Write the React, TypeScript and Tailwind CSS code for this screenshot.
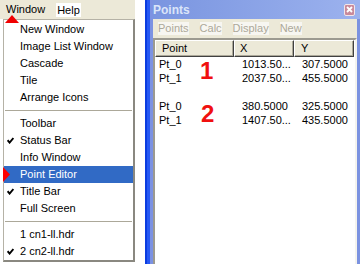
const menuItems: Array<{ label?: string; sep?: boolean; checked?: boolean; active?: boolean }> = [
  { label: "New Window" },
  { label: "Image List Window" },
  { label: "Cascade" },
  { label: "Tile" },
  { label: "Arrange Icons" },
  { sep: true },
  { label: "Toolbar" },
  { label: "Status Bar", checked: true },
  { label: "Info Window" },
  { label: "Point Editor", active: true },
  { label: "Title Bar", checked: true },
  { label: "Full Screen" },
  { sep: true },
  { label: "1 cn1-ll.hdr" },
  { label: "2 cn2-ll.hdr", checked: true },
];

const rows: Array<[string, string, string]> = [
  ["Pt_0", "1013.50...", "307.5000"],
  ["Pt_1", "2037.50...", "455.5000"],
  ["", "", ""],
  ["Pt_0", "380.5000", "325.5000"],
  ["Pt_1", "1407.50...", "435.5000"],
];

function Check() {
  return (
    <svg width="7" height="7" viewBox="0 0 7 7" className="absolute left-[3px] top-[5px]">
      <polyline points="0.6,3.2 2.6,5.6 6.4,1" fill="none" stroke="#000" strokeWidth="1.9" />
    </svg>
  );
}

function WindowMenu() {
  return (
    <div className="relative flex w-[135px] flex-col">
      {/* menu bar */}
      <div className="flex h-[19px] items-center bg-[#ece9d8]">
        <span className="pl-[6px] pr-[7px]">Window</span>
        <span className="ml-[4px] bg-white px-[1px] leading-[14px]">Help</span>
      </div>
      {/* pointer under "Window" */}
      <svg width="14" height="8" viewBox="0 0 14 8" className="absolute left-[5px] top-[15px]">
        <polygon points="7,0 14,8 0,8" fill="#f00000" />
      </svg>

      {/* dropdown */}
      <div className="ml-[3px] flex flex-col border-t border-l border-[#b5b2a6] border-r-2 border-b-2 border-r-[#8a8880] border-b-[#8a8880] bg-white pt-[1px]">
        {menuItems.map((it, i) =>
          it.sep ? (
            <div key={i} className="flex h-[9px] items-center px-[1px]">
              <div className="h-px w-full bg-[#aca899]" />
            </div>
          ) : (
            <div
              key={i}
              className={`relative flex h-[17px] items-center pl-[16px] ${it.active ? "bg-[#316ac5] text-white" : ""}`}
            >
              {it.checked && <Check />}
              {it.active && (
                <svg width="7" height="15" viewBox="0 0 7 15" className="absolute left-[-1px] top-[1px]">
                  <polygon points="0,0 7,7.5 0,15" fill="#ff0000" />
                </svg>
              )}
              {it.label}
            </div>
          )
        )}
      </div>
    </div>
  );
}

function PointsWindow() {
  return (
    <div className="flex h-[264px] w-[215px]">
      {/* left frame */}
      <div className="flex h-full">
        <div className="w-[2px] bg-[#0b3ce0]" />
        <div className="w-[3px] bg-[#2658f4]" />
        <div className="w-[3px] bg-[#7c92e2]" />
      </div>

      <div className="flex flex-1 flex-col">
        {/* title bar */}
        <div className="flex h-[19px] items-center justify-between bg-gradient-to-r from-[#7a95e0] to-[#9cb2ee] pr-[5px]">
          <span className="text-[12px] font-bold text-[#dbe5f9]">Points</span>
          <div className="flex h-[12px] w-[11px] items-center justify-center rounded-[2px] border border-[#f2e6ea] bg-[#c98a9b]">
            <svg width="7" height="7" viewBox="0 0 7 7">
              <path d="M1 1 L6 6 M6 1 L1 6" stroke="#fff" strokeWidth="1.8" />
            </svg>
          </div>
        </div>

        <div className="flex min-h-0 flex-1">
          <div className="flex flex-1 flex-col bg-[#ece9d8]">
            {/* menu bar, all disabled */}
            <div className="flex h-[19px] items-center gap-[11px] pl-[5px] text-[#aca899]">
              {["Points", "Calc", "Display", "New"].map((m) => (
                <span key={m} className="bg-[#f7f6f1] leading-[13px]">
                  {m}
                </span>
              ))}
            </div>

            {/* list view */}
            <div className="relative flex-1 border-t-2 border-l-2 border-r-2 border-t-[#9c9a90] border-l-[#9c9a90] border-r-[#f4f3ee] bg-white">
              <div className="flex h-[17px]">
                {[
                  ["Point", "w-[79px] pl-[6px]"],
                  ["X", "w-[60px] pl-[5px]"],
                  ["Y", "w-[60px] pl-[6px]"],
                ].map(([h, cls]) => (
                  <div
                    key={h}
                    className={`${cls} flex items-center border-t border-l border-white border-r border-b border-r-[#404040] border-b-[#404040] bg-[#ece9d8] shadow-[inset_-1px_-1px_0_#aca899] text-black`}
                  >
                    {h}
                  </div>
                ))}
              </div>

              {rows.map((r, i) => (
                <div key={i} className="flex h-[14px] items-center">
                  <span className="w-[79px] pl-[4px]">{r[0]}</span>
                  <span className="w-[60px] pl-[8px]">{r[1]}</span>
                  <span className="w-[60px] pl-[8px]">{r[2]}</span>
                </div>
              ))}

              {/* annotations */}
              <span className="absolute left-[45px] top-[19px] text-[24px] font-bold leading-[24px] text-[#f01010]">1</span>
              <span className="absolute left-[46px] top-[62px] text-[24px] font-bold leading-[24px] text-[#f01010]">2</span>
            </div>
          </div>
          <div className="w-[3px] bg-[#7b92e0]" />
        </div>
      </div>
    </div>
  );
}

export default function App() {
  return (
    <div className="flex h-[264px] w-[360px] gap-[10px] overflow-hidden bg-white font-['Liberation_Sans',Arial,sans-serif] text-[11px] text-black">
      <WindowMenu />
      <PointsWindow />
    </div>
  );
}
